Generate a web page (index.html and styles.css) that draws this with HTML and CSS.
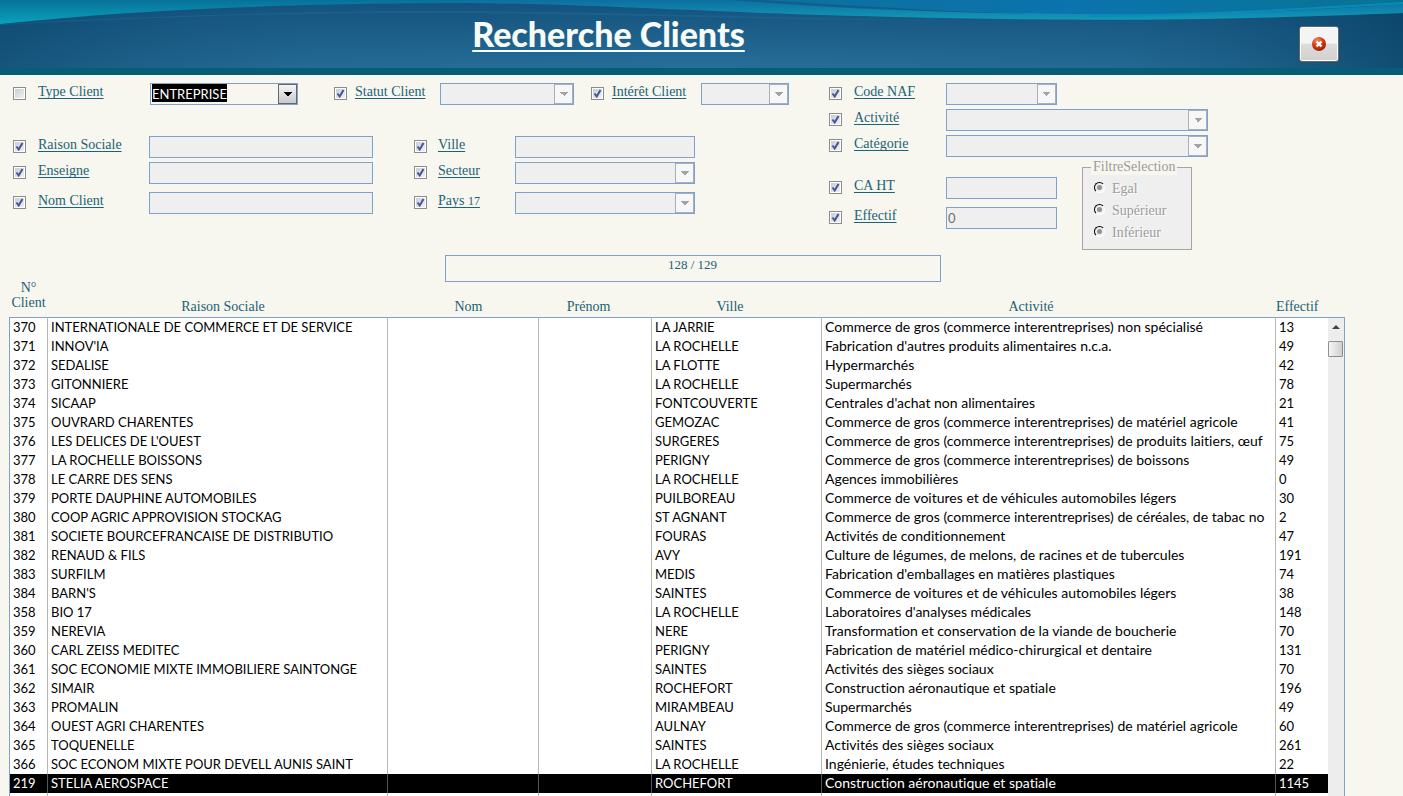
FILE: index.html
```html
<!DOCTYPE html>
<html lang="fr">
<head>
<meta charset="utf-8">
<title>Recherche Clients</title>
<link rel="stylesheet" href="styles.css">
</head>
<body>
<header class="banner">
  <svg class="banner-art" viewBox="0 0 1403 68" preserveAspectRatio="none" aria-hidden="true">
    <defs>
      <linearGradient id="base" x1="0" y1="0" x2="0" y2="1">
        <stop offset="0" stop-color="#13517c"/><stop offset="1" stop-color="#276f99"/>
      </linearGradient>
      <linearGradient id="shade" x1="0" y1="0" x2="1" y2="0">
        <stop offset="0" stop-color="#0b4368" stop-opacity=".6"/><stop offset=".22" stop-color="#15567f" stop-opacity=".2"/>
        <stop offset=".5" stop-color="#15567f" stop-opacity="0"/><stop offset=".8" stop-color="#15567f" stop-opacity=".25"/>
        <stop offset="1" stop-color="#073e62" stop-opacity=".7"/>
      </linearGradient>
      <linearGradient id="left" gradientUnits="userSpaceOnUse" x1="0" y1="0" x2="0" y2="24">
        <stop offset="0" stop-color="#08719a"/><stop offset="1" stop-color="#09a3ba"/>
      </linearGradient>
      <linearGradient id="right" gradientUnits="userSpaceOnUse" x1="0" y1="0" x2="0" y2="20">
        <stop offset="0" stop-color="#0d6fa0"/><stop offset="1" stop-color="#129ab8"/>
      </linearGradient>
      <linearGradient id="crest" x1="0" y1="0" x2="1" y2="0">
        <stop offset="0" stop-color="#0d709c"/><stop offset=".5" stop-color="#0b73ad"/><stop offset="1" stop-color="#087494"/>
      </linearGradient>
    </defs>
    <path fill="url(#base)" d="M0 0H1403V68H0z"/>
    <path fill="url(#shade)" d="M0 0H1403V68H0z"/>
    <path fill="#1c6c97" opacity=".55" d="M0 24C150 16 320 10 460 11C620 12 780 18 960 21C780 20 620 14 460 13C320 12 150 17 0 25z"/>
    <path fill="url(#left)" d="M0 0H470V3C320 3 150 8 0 24z"/>
    <path fill="url(#right)" d="M469 0H1403V13C1160 23 1000 21 760 13C640 8 560 4 469 3z"/>
    <path fill="url(#crest)" d="M740 0H1403V4C1200 19 1040 18 740 0z"/>
    <path fill="#10608d" d="M730 0H765C850 6 940 11 1040 14C930 12 830 8 730 0z"/>
    <path fill="none" stroke="#078bbd" stroke-width="2" d="M1090 16C1210 15 1300 9 1403 3"/>
  </svg>
  <h1 class="banner-title">Recherche Clients</h1>
  <button class="close" type="button" aria-label="Fermer">
    <svg width="16" height="16" viewBox="0 0 16 16" aria-hidden="true">
      <defs><radialGradient id="ball" cx=".38" cy=".25" r=".8"><stop offset="0" stop-color="#f58a65"/><stop offset=".5" stop-color="#d83a10"/><stop offset="1" stop-color="#8e2006"/></radialGradient></defs>
      <circle cx="8" cy="8" r="7" fill="url(#ball)"/>
      <path d="M5.5 5.5L10.5 10.5M10.5 5.5L5.5 10.5" stroke="#fff" stroke-width="2.4"/>
    </svg>
  </button>
</header>

<main class="page">
  <form class="filters">
    <div class="identity">
      <div class="top-row">
        <div class="field kind"><input type="checkbox" id="c1"><label for="c1">Type Client</label>
          <span class="combo active"><select aria-label="Type Client"><option>ENTREPRISE</option></select></span></div>
        <div class="field status"><input type="checkbox" id="c2" checked><label for="c2">Statut Client</label>
          <span class="combo"><select disabled aria-label="Statut Client"></select></span></div>
        <div class="field interest"><input type="checkbox" id="c3" checked><label for="c3">Intérêt Client</label>
          <span class="combo"><select disabled aria-label="Intérêt Client"></select></span></div>
      </div>
      <div class="columns">
        <div class="stack names">
          <div class="field"><input type="checkbox" id="c4" checked><label for="c4">Raison Sociale</label><input type="text" class="box" disabled aria-label="Raison Sociale"></div>
          <div class="field"><input type="checkbox" id="c5" checked><label for="c5">Enseigne</label><input type="text" class="box" disabled aria-label="Enseigne"></div>
          <div class="field spaced"><input type="checkbox" id="c6" checked><label for="c6">Nom Client</label><input type="text" class="box" disabled aria-label="Nom Client"></div>
        </div>
        <div class="stack places">
          <div class="field"><input type="checkbox" id="c7" checked><label for="c7">Ville</label><input type="text" class="box" disabled aria-label="Ville"></div>
          <div class="field"><input type="checkbox" id="c8" checked><label for="c8">Secteur</label><span class="combo"><select disabled aria-label="Secteur"></select></span></div>
          <div class="field spaced"><input type="checkbox" id="c9" checked><label for="c9">Pays <span class="oldstyle">17</span></label><span class="combo"><select disabled aria-label="Pays"></select></span></div>
        </div>
      </div>
    </div>
    <div class="business">
      <div class="stack">
        <div class="field short"><input type="checkbox" id="c10" checked><label for="c10">Code NAF</label><span class="combo"><select disabled aria-label="Code NAF"></select></span></div>
        <div class="field"><input type="checkbox" id="c11" checked><label for="c11">Activité</label><span class="combo"><select disabled aria-label="Activité"></select></span></div>
        <div class="field"><input type="checkbox" id="c12" checked><label for="c12">Catégorie</label><span class="combo"><select disabled aria-label="Catégorie"></select></span></div>
      </div>
      <div class="figures">
        <div class="stack amounts">
          <div class="field short"><input type="checkbox" id="c13" checked><label for="c13">CA HT</label><input type="text" class="box" disabled aria-label="CA HT"></div>
          <div class="field short spaced"><input type="checkbox" id="c14" checked><label for="c14">Effectif</label><input type="text" class="box" value="0" disabled aria-label="Effectif"></div>
        </div>
        <fieldset class="compare" disabled>
          <legend>FiltreSelection</legend>
          <label><input type="radio" name="cmp">Egal</label>
          <label><input type="radio" name="cmp">Supérieur</label>
          <label><input type="radio" name="cmp">Inférieur</label>
        </fieldset>
      </div>
    </div>
  </form>

  <output class="counter">128 / 129</output>

  <section class="results">
    <table class="grid">
      <colgroup><col class="w-id"><col class="w-company"><col class="w-last"><col class="w-first"><col class="w-city"><col><col class="w-staff"></colgroup>
      <thead><tr><th class="tall">N°<br>Client</th><th class="inset">Raison Sociale</th><th class="inset">Nom</th><th class="outset">Prénom</th><th class="outset">Ville</th><th class="outset-wide">Activité</th><th class="start">Effectif</th></tr></thead>
      <tbody>
        <tr><td>370</td><td>INTERNATIONALE DE COMMERCE ET DE SERVICE</td><td></td><td></td><td>LA JARRIE</td><td>Commerce de gros (commerce interentreprises) non spécialisé</td><td>13</td></tr>
        <tr><td>371</td><td>INNOV'IA</td><td></td><td></td><td>LA ROCHELLE</td><td>Fabrication d'autres produits alimentaires n.c.a.</td><td>49</td></tr>
        <tr><td>372</td><td>SEDALISE</td><td></td><td></td><td>LA FLOTTE</td><td>Hypermarchés</td><td>42</td></tr>
        <tr><td>373</td><td>GITONNIERE</td><td></td><td></td><td>LA ROCHELLE</td><td>Supermarchés</td><td>78</td></tr>
        <tr><td>374</td><td>SICAAP</td><td></td><td></td><td>FONTCOUVERTE</td><td>Centrales d'achat non alimentaires</td><td>21</td></tr>
        <tr><td>375</td><td>OUVRARD CHARENTES</td><td></td><td></td><td>GEMOZAC</td><td>Commerce de gros (commerce interentreprises) de matériel agricole</td><td>41</td></tr>
        <tr><td>376</td><td>LES DELICES DE L'OUEST</td><td></td><td></td><td>SURGERES</td><td>Commerce de gros (commerce interentreprises) de produits laitiers, œuf</td><td>75</td></tr>
        <tr><td>377</td><td>LA ROCHELLE BOISSONS</td><td></td><td></td><td>PERIGNY</td><td>Commerce de gros (commerce interentreprises) de boissons</td><td>49</td></tr>
        <tr><td>378</td><td>LE CARRE DES SENS</td><td></td><td></td><td>LA ROCHELLE</td><td>Agences immobilières</td><td>0</td></tr>
        <tr><td>379</td><td>PORTE DAUPHINE AUTOMOBILES</td><td></td><td></td><td>PUILBOREAU</td><td>Commerce de voitures et de véhicules automobiles légers</td><td>30</td></tr>
        <tr><td>380</td><td>COOP AGRIC APPROVISION STOCKAG</td><td></td><td></td><td>ST AGNANT</td><td>Commerce de gros (commerce interentreprises) de céréales, de tabac no</td><td>2</td></tr>
        <tr><td>381</td><td>SOCIETE BOURCEFRANCAISE DE DISTRIBUTIO</td><td></td><td></td><td>FOURAS</td><td>Activités de conditionnement</td><td>47</td></tr>
        <tr><td>382</td><td>RENAUD &amp; FILS</td><td></td><td></td><td>AVY</td><td>Culture de légumes, de melons, de racines et de tubercules</td><td>191</td></tr>
        <tr><td>383</td><td>SURFILM</td><td></td><td></td><td>MEDIS</td><td>Fabrication d'emballages en matières plastiques</td><td>74</td></tr>
        <tr><td>384</td><td>BARN'S</td><td></td><td></td><td>SAINTES</td><td>Commerce de voitures et de véhicules automobiles légers</td><td>38</td></tr>
        <tr><td>358</td><td>BIO 17</td><td></td><td></td><td>LA ROCHELLE</td><td>Laboratoires d'analyses médicales</td><td>148</td></tr>
        <tr><td>359</td><td>NEREVIA</td><td></td><td></td><td>NERE</td><td>Transformation et conservation de la viande de boucherie</td><td>70</td></tr>
        <tr><td>360</td><td>CARL ZEISS MEDITEC</td><td></td><td></td><td>PERIGNY</td><td>Fabrication de matériel médico-chirurgical et dentaire</td><td>131</td></tr>
        <tr><td>361</td><td>SOC ECONOMIE MIXTE IMMOBILIERE SAINTONGE</td><td></td><td></td><td>SAINTES</td><td>Activités des sièges sociaux</td><td>70</td></tr>
        <tr><td>362</td><td>SIMAIR</td><td></td><td></td><td>ROCHEFORT</td><td>Construction aéronautique et spatiale</td><td>196</td></tr>
        <tr><td>363</td><td>PROMALIN</td><td></td><td></td><td>MIRAMBEAU</td><td>Supermarchés</td><td>49</td></tr>
        <tr><td>364</td><td>OUEST AGRI CHARENTES</td><td></td><td></td><td>AULNAY</td><td>Commerce de gros (commerce interentreprises) de matériel agricole</td><td>60</td></tr>
        <tr><td>365</td><td>TOQUENELLE</td><td></td><td></td><td>SAINTES</td><td>Activités des sièges sociaux</td><td>261</td></tr>
        <tr><td>366</td><td>SOC ECONOM MIXTE POUR DEVELL AUNIS SAINT</td><td></td><td></td><td>LA ROCHELLE</td><td>Ingénierie, études techniques</td><td>22</td></tr>
        <tr class="selected"><td>219</td><td>STELIA AEROSPACE</td><td></td><td></td><td>ROCHEFORT</td><td>Construction aéronautique et spatiale</td><td>1145</td></tr>
        <tr class="filler"><td></td><td></td><td></td><td></td><td></td><td></td><td></td></tr>
      </tbody>
    </table>
    <div class="scrollbar" aria-hidden="true">
      <svg class="scroll-up" width="16" height="20" viewBox="0 0 16 20"><path d="M4 11L8 7L12 11z" fill="#444"/></svg>
      <div class="thumb"></div>
    </div>
  </section>
</main>
</body>
</html>
```
FILE: styles.css
```css
:root {
  --edge: #7da2ce;
  --ink: #1b6374;
  --paper: #f7f6ef;
  --off: #efefef;
  --head: 43px;
  --serif: "Liberation Serif", serif;
  --sans: Lato, "Liberation Sans", sans-serif;
}
* { box-sizing: border-box; }
body {
  margin: 0;
  height: 100vh;
  overflow: hidden;
  background: var(--paper);
  color: var(--ink);
  font: 14px/16px var(--serif);
}

.banner {
  position: relative;
  display: grid;
  grid-template-columns: minmax(0, 1217fr) 122fr;
  align-items: center;
  height: 75px;
  padding: 6px 64px 0 0;
  border-bottom: 7px solid #065d76;
}
.banner-art { position: absolute; inset: 0; width: 100%; height: 100%; }
.banner-title {
  position: relative;
  margin: 0;
  padding-bottom: 6px;
  text-align: center;
  color: #f7faf5;
  font: 900 34px/40px var(--sans);
  text-decoration: underline;
  text-decoration-thickness: 2px;
  text-underline-offset: 3px;
  text-decoration-skip-ink: none;
}
.close {
  position: relative;
  justify-self: end;
  display: grid;
  place-items: center;
  width: 40px;
  height: 36px;
  margin-top: 14px;
  padding: 0;
  border: 1px solid #666;
  border-radius: 3px;
  background: linear-gradient(#f4f4f4 48%, #dcdcdc 50%, #d0d0d0);
  box-shadow: inset 0 0 0 1px #fff;
}

.page { padding: 8px 58px 0 9px; }
.filters {
  display: grid;
  grid-template-columns: 816fr 520fr;
}
.field { display: flex; align-items: center; height: 22px; }
.field label {
  padding-bottom: 4px;
  text-decoration: underline;
  text-decoration-skip-ink: none;
  text-underline-offset: 2px;
  white-space: nowrap;
}
.field input[type="checkbox"] {
  appearance: none;
  flex: none;
  width: 13px;
  height: 13px;
  margin: 0 12px 2px 0;
  border: 1px solid #8a8c8e;
  background: linear-gradient(135deg, #c5cad2, #f4f4f4);
  box-shadow: inset 0 0 0 1px #fff;
}
.field input[type="checkbox"]:checked {
  background:
    url("data:image/svg+xml,%3Csvg xmlns='http://www.w3.org/2000/svg' viewBox='0 0 11 11'%3E%3Cpath d='M2.500 5.500L4.700 8.500L8.500 2' fill='none' stroke='%23435497' stroke-width='2'/%3E%3C/svg%3E"),
    linear-gradient(135deg, #c5cad2, #f4f4f4);
}
.box, .combo {
  flex: none;
  height: 22px;
  border: 1px solid var(--edge);
  background: var(--off);
}
.box { padding: 0 1px; color: #707070; font: 13px/20px var(--sans); }
.combo { position: relative; display: block; }
.combo select {
  appearance: none;
  display: block;
  width: 100%;
  height: 20px;
  padding: 0 18px 0 1px;
  border: 0;
  background: none;
  font: 13px/18px var(--sans);
}
.combo::after {
  content: "";
  position: absolute;
  inset: 0 0 0 auto;
  width: 17px;
  border: 1px solid #a9afba;
  background:
    conic-gradient(from -45deg at 50% 100%, #a3a3a3 90deg, transparent 0) center / 8px 4px no-repeat,
    #f7f7f7;
  pointer-events: none;
}
.combo.active { background: var(--paper); }
.combo.active select {
  color: #fff;
  background: linear-gradient(#000, #000) 1px 0 / 75px 18px no-repeat;
}
.combo.active::after {
  border-color: #666;
  background:
    conic-gradient(from -45deg at 50% 100%, #000 90deg, transparent 0) center / 8px 4px no-repeat,
    linear-gradient(#f5f5f5, #c9c9cd);
}

.top-row { display: flex; }
.top-row .field { padding-left: 4px; }
.top-row .field input[type="checkbox"] { margin-right: 8px; }
.top-row .kind input[type="checkbox"] { margin-right: 12px; }
.kind { width: 321px; }
.kind label { width: 112px; }
.kind .combo { width: 148px; }
.status { width: 257px; }
.status label { width: 85px; }
.status .combo { width: 134px; }
.interest label { width: 89px; }
.interest .combo { width: 88px; }

.columns { display: flex; margin-top: 31px; padding-left: 4px; }
.stack { display: flex; flex-direction: column; gap: 4px; }
.spaced { margin-top: 4px; }
.names { width: 401px; }
.names label { width: 111px; }
.names .box { width: 224px; }
.places label { width: 77px; }
.places .field input[type="checkbox"] { margin-right: 11px; }
.places .box, .places .combo { width: 180px; }
.oldstyle { font-size: 12px; }

.business { padding-left: 4px; }
.business .field label { width: 92px; }
.business .combo { width: 262px; }
.business .short .combo, .business .short .box { width: 111px; }
.figures { display: flex; gap: 25px; }
.amounts { padding-top: 20px; }
.compare {
  display: flex;
  flex-direction: column;
  gap: 6px;
  width: 110px;
  height: 91px;
  margin: 2px 0 0;
  padding: 6px 11px;
  border: 1px solid #a5a5a5;
  background: var(--off);
  color: #9c9c9c;
}
.compare legend { margin-left: -3px; padding: 0 2px; background: var(--paper); white-space: nowrap; }
.compare label { display: flex; align-items: center; gap: 7px; text-shadow: 1px 1px #fff; }
.compare input {
  appearance: none;
  width: 11px;
  height: 11px;
  margin: 0 0 4px;
  border: 1px solid;
  border-color: #000 #fff #fff #000;
  border-radius: 50%;
  background: repeating-conic-gradient(#333 0 25%, #eee 0 50%) center / 2px 2px content-box;
  padding: 2px;
}

.counter {
  display: block;
  width: 37.125%;
  height: 27px;
  margin: 5px auto 0 32.600%;
  padding-top: 1px;
  border: 1px solid var(--edge);
  text-align: center;
  font-size: 13px;
}

.results { display: flex; margin-top: -8px; }
.grid {
  flex: 1;
  min-width: 0;
  table-layout: fixed;
  border-collapse: separate;
  border-spacing: 0;
}
.w-id { width: 39px; }
.w-company { width: 340px; }
.w-last { width: 151px; }
.w-first { width: 113px; }
.w-city { width: 170px; }
.w-staff { width: 52px; }
.grid th { height: var(--head); padding: 0 0 2px; vertical-align: bottom; font-weight: normal; line-height: 16px; }
.grid .tall { padding-bottom: 7px; line-height: 15px; }
.grid .inset { padding-left: 10px; }
.grid .outset { padding-right: 14px; }
.grid .outset-wide { padding-right: 36px; }
.grid .start { text-align: left; }
.grid td {
  height: 19px;
  padding: 0 0 0 3px;
  border-right: 1px solid #b7b7b7;
  background: #fff;
  color: #000;
  font: 13px/19px var(--sans);
  font-variant-ligatures: none;
  white-space: nowrap;
  overflow: hidden;
}
.grid td:nth-child(6) { font-size: 14px; line-height: 18px; padding-bottom: 1px; }
.grid td:first-child { border-left: 1px solid var(--edge); }
.grid td:last-child { border-right: 0; }
.grid tbody tr:first-child td { border-top: 1px solid var(--edge); }
.grid .selected td { background: #000; color: #fff; border-right-color: #555; }

.scrollbar {
  width: 17px;
  margin-top: var(--head);
  border: 1px solid var(--edge);
  border-width: 1px 1px 0 0;
  background: #ededed;
}
.scroll-up { display: block; }
.thumb {
  height: 16px;
  margin: 3px 1px 0 0;
  border: 1px solid #8f8f8f;
  border-radius: 1px;
  background: linear-gradient(90deg, #f5f5f5, #cfcfcf);
}
```
